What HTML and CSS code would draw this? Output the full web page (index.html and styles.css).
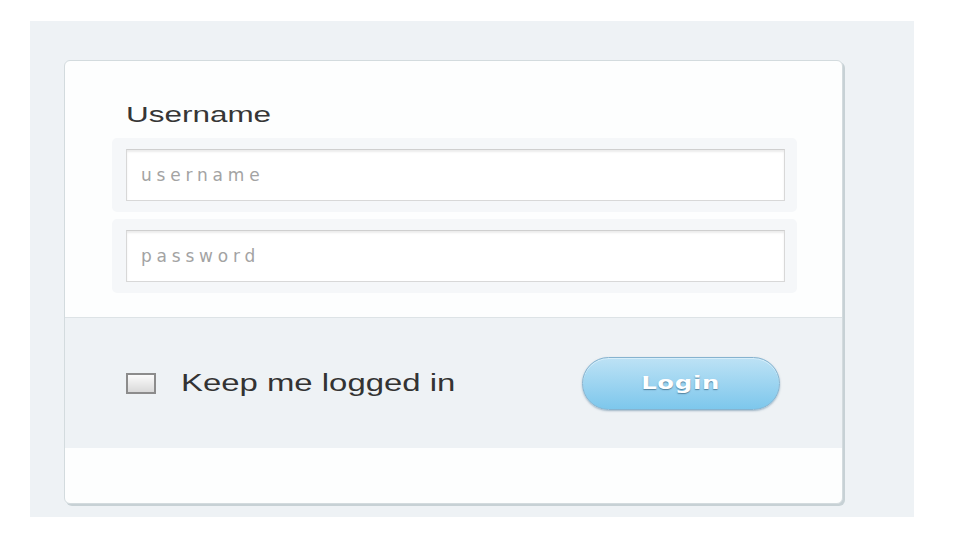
FILE: index.html
```html
<!DOCTYPE html>
<html lang="en">
<head>
  <meta charset="UTF-8">
  <meta name="viewport" content="width=device-width, initial-scale=1.0">
  <title>Login</title>
  <link rel="stylesheet" href="styles.css">
</head>
<body>
  <div class="panel">
    <form class="login-card" onsubmit="return false">
      <div class="fields">
        <label class="label" for="username"><span class="wide">Username</span></label>
        <div class="field-wrap">
          <input type="text" id="username" class="field" placeholder="username">
        </div>
        <div class="field-wrap">
          <input type="password" id="password" class="field" placeholder="password">
        </div>
      </div>

      <div class="actions">
        <label class="remember">
          <input type="checkbox" class="check">
          <span class="check-box"></span>
          <span class="wide">Keep me logged in</span>
        </label>
        <button type="submit" class="login-button"><span class="wide">Login</span></button>
      </div>
    </form>
  </div>
</body>
</html>
```

FILE: styles.css
```css
    body {
      margin: 0;
      padding: 21px 46px 24px 30px;
      background: #fff;
      font-family: 'Liberation Sans', Arial, sans-serif;
      color: #333;
    }

    .panel {
      background: #eef2f5;
      padding: 39px 71px 13px 34px;
    }

    .login-card {
      background: #fdfefe;
      border: 1px solid #d3dbde;
      border-radius: 6px;
      box-shadow: 2px 2px 0 #c7d1d5;
      padding-bottom: 55px;
    }

    /* stretched text, like the original */
    .wide {
      display: inline-block;
      transform: scaleX(1.43);
      transform-origin: left center;
      white-space: nowrap;
    }

    .fields {
      padding: 41px 45px 24px 47px;
    }

    .label {
      display: block;
      font-size: 22px;
      line-height: 26px;
      margin: 0 0 10px 14px;
      color: #363636;
    }

    .field-wrap {
      background: #f5f7f9;
      border-radius: 5px;
      padding: 11px 12px 11px 14px;
      margin-bottom: 7px;
    }

    .field-wrap:last-child {
      margin-bottom: 0;
    }

    .field {
      display: block;
      box-sizing: border-box;
      width: 100%;
      height: 52px;
      border: 1px solid #d8d8d8;
      border-top-color: #cfcfcf;
      box-shadow: inset 0 2px 2px #ececec;
      background: #fff;
      padding: 0 14px;
      font-family: 'DejaVu Sans', Verdana, sans-serif;
      font-size: 17px;
      letter-spacing: 4.8px;
      color: #555;
      outline: none;
    }

    .field::placeholder {
      color: #a3a3a3;
    }

    .actions {
      display: flex;
      align-items: center;
      justify-content: space-between;
      height: 130px;
      padding: 0 62px 0 61px;
      background: #eef2f5;
      border-top: 1px solid #dde3e6;
    }

    .remember {
      display: flex;
      align-items: center;
      font-size: 23px;
      color: #333;
      cursor: pointer;
    }

    .check {
      display: none;
    }

    .check-box {
      width: 26px;
      height: 17px;
      border: 2px solid #8c8c8c;
      background: linear-gradient(#fbfbfb, #d9d9d9);
      margin-right: 25px;
    }

    .check:checked + .check-box {
      background: linear-gradient(#9fd3f1, #6bbbe6);
    }

    .login-button {
      width: 198px;
      height: 53px;
      border: 1px solid #86b3cf;
      border-radius: 27px;
      background: linear-gradient(#bde2f5, #7dc7ec);
      box-shadow: 0 1px 2px rgba(80, 120, 150, 0.5), inset 0 1px 0 #d6eefa;
      color: #fff;
      font-family: 'DejaVu Sans', Verdana, sans-serif;
      font-weight: bold;
      font-size: 17px;
      letter-spacing: 0.5px;
      text-shadow: 0 1px 1px #4f7f9c;
      cursor: pointer;
    }

    .login-button .wide {
      transform-origin: center;
    }
```
